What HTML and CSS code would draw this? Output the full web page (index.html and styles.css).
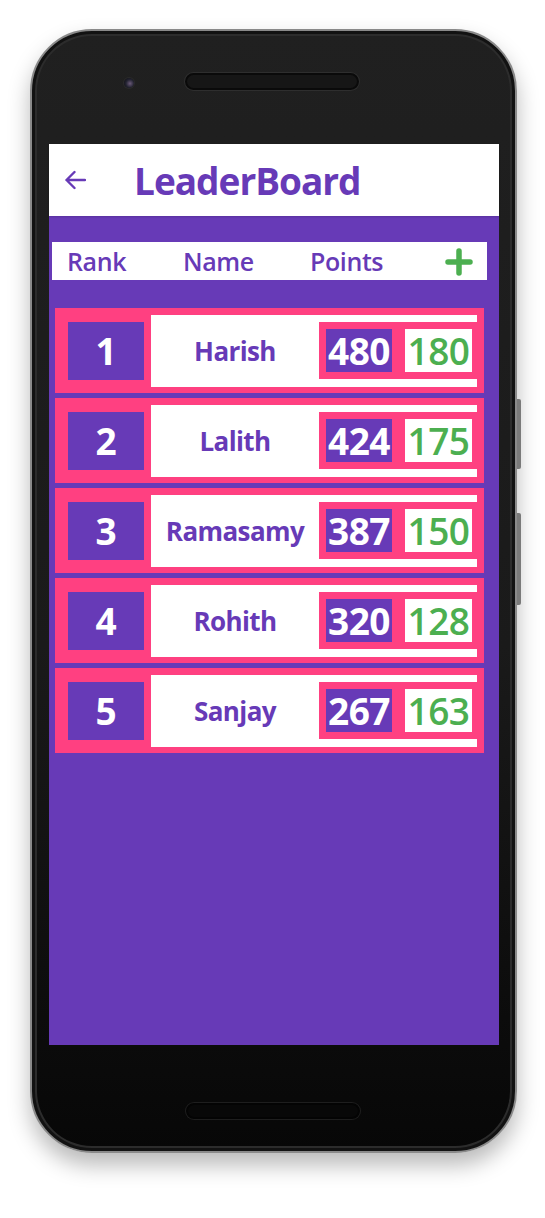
FILE: index.html
```html
<!DOCTYPE html>
<html lang="en">
<head>
<meta charset="utf-8">
<title>LeaderBoard</title>
<link rel="stylesheet" href="styles.css">
</head>
<body>
<div class="phone">
  <div class="bezel-top">
    <span class="camera"></span>
    <span class="speaker"></span>
  </div>
  <div class="screen">
    <div class="appbar">
      <svg class="back" width="22" height="20" viewBox="0 0 22 20" aria-hidden="true">
        <path d="M21 10H2.5M10.5 2L2.5 10L10.5 18" fill="none" stroke="#673AB7" stroke-width="2.4" stroke-linecap="round" stroke-linejoin="round"/>
      </svg>
      <h1 class="title">LeaderBoard</h1>
    </div>
    <div class="content">
      <div class="strip">
        <span class="col">Rank</span>
        <span class="col">Name</span>
        <span class="col">Points</span>
        <svg class="plus" width="28" height="28" viewBox="0 0 28 28" aria-hidden="true">
          <path d="M14 3V25M3 14H25" fill="none" stroke="#4CAF50" stroke-width="5.5" stroke-linecap="round"/>
        </svg>
      </div>
      <div class="rows">
        <div class="row">
          <div class="rank">1</div>
          <div class="card">
            <div class="name">Harish</div>
            <div class="points"><span class="pts">480</span><span class="bonus">180</span></div>
          </div>
        </div>
        <div class="row">
          <div class="rank">2</div>
          <div class="card">
            <div class="name">Lalith</div>
            <div class="points"><span class="pts">424</span><span class="bonus">175</span></div>
          </div>
        </div>
        <div class="row">
          <div class="rank">3</div>
          <div class="card">
            <div class="name">Ramasamy</div>
            <div class="points"><span class="pts">387</span><span class="bonus">150</span></div>
          </div>
        </div>
        <div class="row">
          <div class="rank">4</div>
          <div class="card">
            <div class="name">Rohith</div>
            <div class="points"><span class="pts">320</span><span class="bonus">128</span></div>
          </div>
        </div>
        <div class="row">
          <div class="rank">5</div>
          <div class="card">
            <div class="name">Sanjay</div>
            <div class="points"><span class="pts">267</span><span class="bonus">163</span></div>
          </div>
        </div>
      </div>
    </div>
  </div>
  <div class="bezel-bottom">
    <span class="speaker"></span>
  </div>
  <span class="btn btn-power"></span>
  <span class="btn btn-volume"></span>
</div>
</body>
</html>
```

FILE: styles.css
```css
* { box-sizing: border-box; }

html, body {
  margin: 0;
  padding: 0;
  background: #ffffff;
}

body {
  font-family: "Open Sans", "DejaVu Sans", sans-serif;
  width: 545px;
  height: 1218px;
  overflow: hidden;
}

.phone {
  position: relative;
  margin: 29px 0 0 30px;
  width: 487px;
  height: 1124px;
  padding: 0 16px 0 17px;
  border: 2px solid #8a8a8a;
  border-radius: 62px;
  background: linear-gradient(180deg, #202020 0%, #1a1a1a 55%, #070707 100%);
  box-shadow:
    inset 0 0 0 3px #121212,
    inset 0 0 0 5px #2c2c2c,
    0 12px 22px rgba(0, 0, 0, 0.28);
  display: flex;
  flex-direction: column;
}

.bezel-top {
  height: 113px;
  display: flex;
  align-items: flex-start;
  padding-top: 42px;
}

.camera {
  width: 10px;
  height: 10px;
  margin-left: 75px;
  margin-top: 5px;
  border-radius: 50%;
  background: radial-gradient(circle at 60% 55%, #6a5a78 0%, #222230 50%, #0c0c0c 100%);
  box-shadow: 0 0 0 1px #2a2a2a;
}

.speaker {
  display: block;
  width: 174px;
  height: 17px;
  border-radius: 9px;
  background: #161616;
  border: 2px solid #0a0a0a;
  box-shadow: 0 0 0 1px #2e2e2e;
}

.bezel-top .speaker {
  margin-left: 51px;
}

.bezel-bottom {
  height: 106px;
  display: flex;
  justify-content: flex-start;
  padding-top: 58px;
}

.bezel-bottom .speaker {
  margin-left: 137px;
  height: 16px;
  background: #080808;
  border-color: #040404;
  box-shadow: 0 0 0 1px #1e1e1e;
}

.btn {
  position: absolute;
  right: -6px;
  width: 4px;
  background: #7a7a7a;
  border-radius: 0 2px 2px 0;
}

.btn-power { top: 368px; height: 70px; }
.btn-volume { top: 482px; height: 92px; }

.screen {
  width: 450px;
  height: 901px;
  background: #673AB7;
  display: flex;
  flex-direction: column;
}

.appbar {
  height: 72px;
  background: #ffffff;
  display: flex;
  align-items: center;
  padding-left: 15px;
  box-shadow: 0 1px 2px rgba(0, 0, 0, 0.15);
}

.back { display: block; flex: none; }

.title {
  margin: 0 0 0 48px;
  font-size: 37px;
  font-weight: 700;
  letter-spacing: -1px;
  color: #673AB7;
  line-height: 1;
}

.content {
  padding: 26px 12px 0 3px;
}

.strip {
  height: 38px;
  background: #ffffff;
  display: grid;
  grid-template-columns: 116px 127px 135px 28px;
  align-items: center;
  padding-left: 15px;
}

.col {
  font-size: 25px;
  font-weight: 600;
  color: #673AB7;
  line-height: 1;
  letter-spacing: -0.4px;
}

.plus { display: block; margin-top: 2px; }

.rows {
  margin: 28px 3px 0 3px;
  display: flex;
  flex-direction: column;
  gap: 5px;
}

.row {
  height: 85px;
  background: #FF4081;
  display: flex;
  align-items: center;
  padding: 0 7px 0 13px;
}

.rank {
  width: 76px;
  height: 58px;
  background: #673AB7;
  color: #ffffff;
  font-size: 37px;
  font-weight: 700;
  display: flex;
  align-items: center;
  justify-content: center;
  line-height: 1;
  margin-right: 7px;
}

.card {
  flex: 1;
  height: 72px;
  background: #ffffff;
  display: flex;
  align-items: center;
}

.name {
  flex: 1;
  text-align: center;
  font-size: 26px;
  font-weight: 700;
  color: #673AB7;
  letter-spacing: -0.6px;
  line-height: 1;
}

.points {
  height: 57px;
  width: 158px;
  background: #FF4081;
  display: flex;
  align-items: center;
  padding: 0 5px 0 7px;
  gap: 13px;
}

.pts,
.bonus {
  width: 66px;
  height: 43px;
  display: flex;
  align-items: center;
  justify-content: center;
  font-size: 37px;
  line-height: 1;
  letter-spacing: -0.5px;
}

.pts {
  background: #673AB7;
  color: #ffffff;
  font-weight: 700;
}

.bonus {
  width: 67px;
  background: #ffffff;
  color: #4CAF50;
  font-weight: 600;
}
```
